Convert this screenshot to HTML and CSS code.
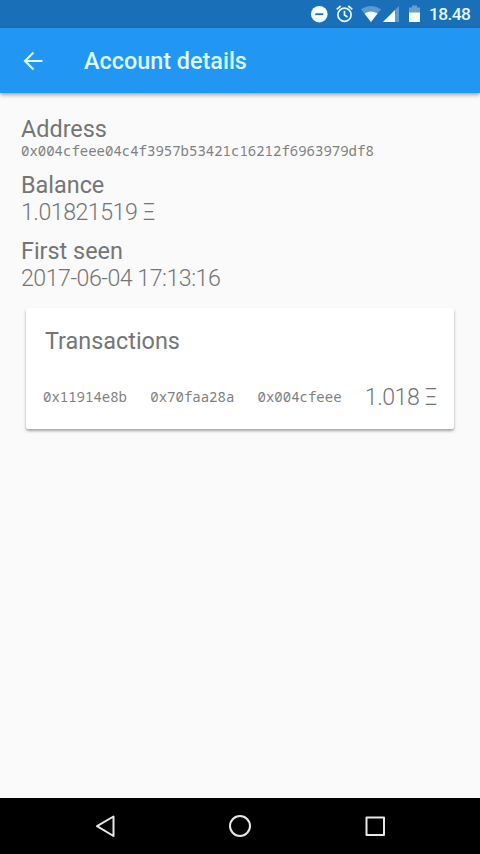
FILE: index.html
```html
<!DOCTYPE html>
<html lang="en">
<head>
    <meta charset="UTF-8">
    <meta name="viewport" content="width=device-width, initial-scale=1.0">
    <title>Account details</title>
    <link rel="stylesheet" href="styles.css">
</head>
<body>
    <div class="status-bar">
        <svg width="180" height="28" viewBox="0 0 180 28">
            <circle cx="19.3" cy="14.2" r="8.3" fill="#f4fdff"/>
            <path d="M15.3 14.2h8" stroke="#1a70b8" stroke-width="1.8"/>
            <g fill="none" stroke="#e3f8ff" stroke-width="1.7">
                <circle cx="44.5" cy="14.8" r="6.6"/>
                <path d="M44.5 10.8v4.3l3 1.8M36.7 9.3l4-3.3M52.3 9.3l-4-3.3"/>
            </g>
            <path d="M61 9.3Q71 2.500 81 9.300L71 22z" fill="#5b9bd0"/>
            <path d="M64.500 13.500Q71 9.500 77.500 13.500L71 22z" fill="#f4fdff"/>
            <path d="M83 22L99 6v16z" fill="#5b9bd0"/>
            <path d="M83 22L95 10v12z" fill="#f4fdff"/>
            <path d="M109 7.500h3V5.500h5v2h3V13h-11z" fill="#6a9fc8"/>
            <path d="M109 12.500h11V22h-11z" fill="#f4fdff"/>
        </svg>
        <span class="clock">18.48</span>
    </div>
    <header class="toolbar">
        <svg class="back" width="24" height="24" viewBox="0 0 24 24">
            <path d="M21.500 12H4M12.500 3.500L4 12l8.500 8.500" fill="none" stroke="#dcfaff" stroke-width="2.200"/>
        </svg>
        <h1>Account details</h1>
    </header>
    <main>
        <h2>Address</h2>
        <p class="hash address">0x004cfeee04c4f3957b53421c16212f6963979df8</p>
        <h2>Balance</h2>
        <p class="value">1.01821519 Ξ</p>
        <h2>First seen</h2>
        <p class="value">2017-06-04 17:13:16</p>
        <section class="card">
            <h2>Transactions</h2>
            <div class="row">
                <span class="hash">0x11914e8b</span>
                <span class="hash">0x70faa28a</span>
                <span class="hash">0x004cfeee</span>
                <span class="value">1.018 Ξ</span>
            </div>
        </section>
    </main>
    <nav class="nav-bar">
        <svg width="480" height="56" viewBox="0 0 480 56" fill="none" stroke="#e8e8e8" stroke-width="2" stroke-linejoin="round">
            <path d="M97 28.200L113.500 18.500v19.500z"/>
            <circle cx="240" cy="28" r="10"/>
            <path d="M366.500 19.500h17.500v17.500h-17.500z"/>
        </svg>
    </nav>
</body>
</html>
```
FILE: styles.css
```css
body {
    display: flex;
    flex-direction: column;
    height: 854px;
    margin: 0;
    background: #fafafa;
    color: #757575;
    font-family: Roboto, sans-serif;
}
h1, h2, p { margin: 0; }
.status-bar {
    display: flex;
    justify-content: flex-end;
    height: 28px;
    background: #1a70b8;
}
.status-bar svg { margin-right: -51px; }
.clock {
    width: 51px;
    line-height: 29px;
    color: #e3f8ff;
    font-size: 17.4px;
    font-weight: 500;
    letter-spacing: -0.6px;
}
.toolbar {
    display: flex;
    align-items: center;
    height: 65px;
    padding-left: 21px;
    background: #2196f3;
    box-shadow: 0 2px 4px rgba(0, 0, 0, 0.35);
}
h1 {
    margin-left: 39px;
    color: #dcfaff;
    font-size: 23.4px;
    font-weight: 500;
}
main {
    flex: 1;
    padding: 22px 26px 0 21px;
}
h2 {
    font-size: 23.4px;
    font-weight: 400;
    line-height: 28px;
}
.hash {
    color: #808080;
    font-family: "Droid Sans Mono", "Noto Sans Mono", "Noto Sans", monospace;
    font-size: 14px;
    line-height: 16px;
}
.address {
    line-height: 15px;
    margin-bottom: 13px;
}
.value {
    font-size: 23.2px;
    font-weight: 300;
    line-height: 27px;
    letter-spacing: -0.5px;
}
p.value { margin-bottom: 11px; }
.card {
    box-sizing: border-box;
    height: 121px;
    margin: 16px 0 0 5px;
    padding: 19px 17px 0 19px;
    background: #fff;
    border-radius: 2px;
    box-shadow: 0 2px 3px rgba(0, 0, 0, 0.35);
}
.row {
    display: flex;
    justify-content: space-between;
    align-items: center;
    margin: 29px 0 0 -2px;
}
.row .hash { padding-bottom: 2px; }
.nav-bar {
    height: 56px;
    background: #000;
}
```
